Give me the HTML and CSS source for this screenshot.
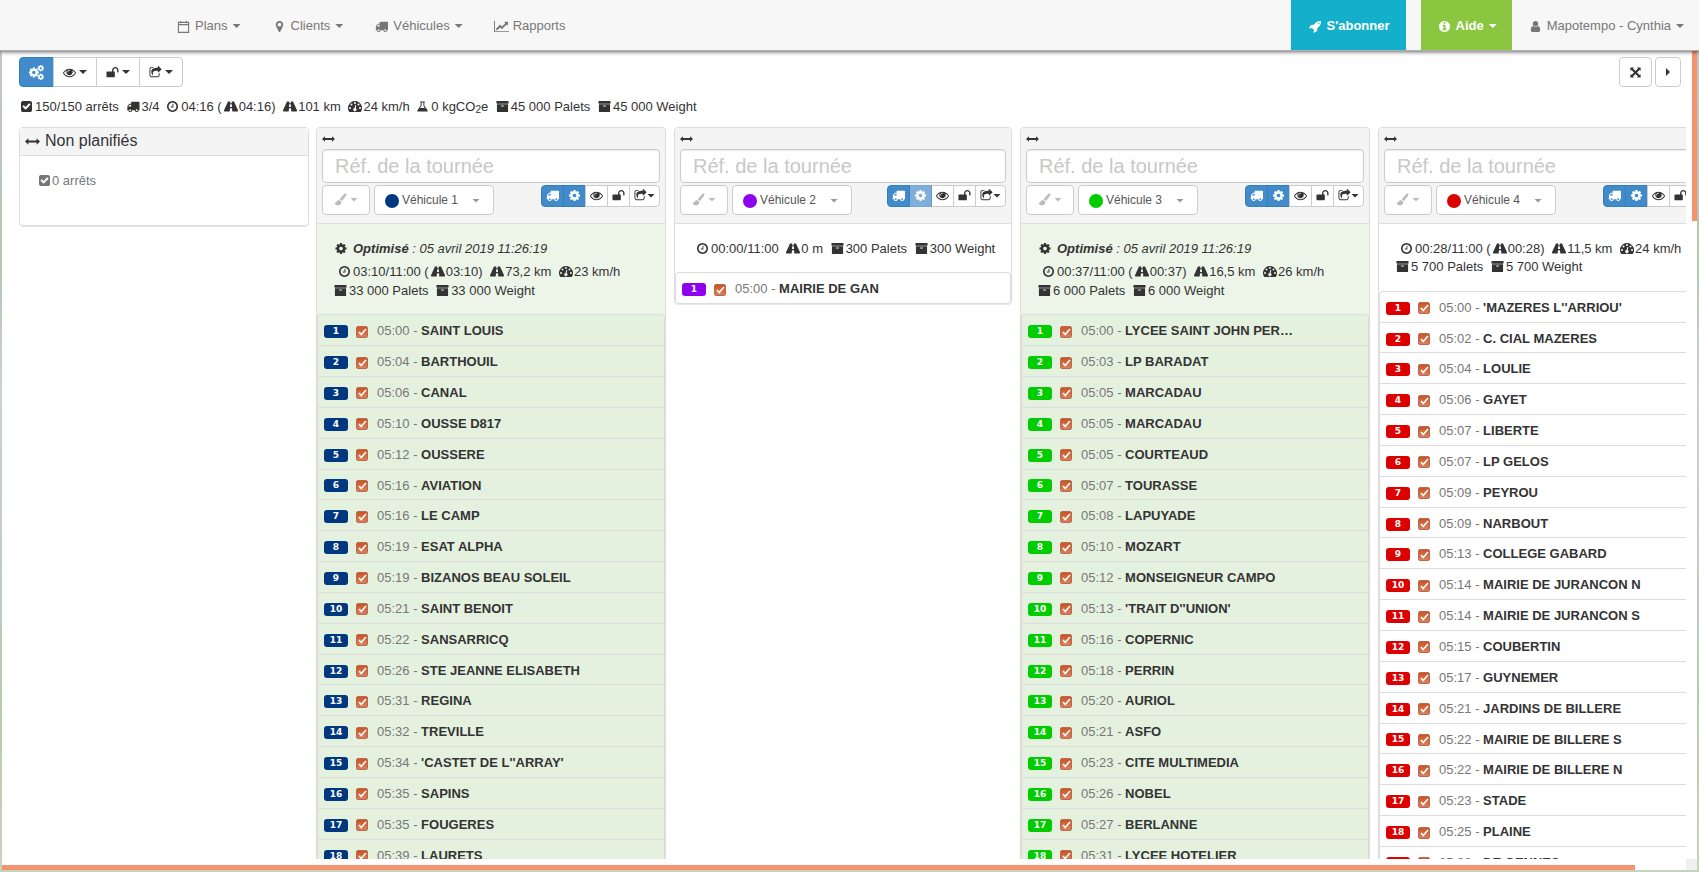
FILE: index.html
```html
<!DOCTYPE html>
<html lang="fr">
<head>
    <meta charset="UTF-8">
    <title>Mapotempo</title>
    <link rel="stylesheet" href="styles.css">
</head>
<body>
    <svg class="sprite" aria-hidden="true">
        <symbol id="calendar" viewBox="0 0 13 14"><path d="M1 2.5h11v10.8H1z M1 5h11 M3.5 1v2.6 M9.5 1v2.6" fill="none" stroke="currentColor" stroke-width="1.2"/></symbol>
        <symbol id="marker" viewBox="0 0 1792 1792"><path d="M1152 640q0-106-75-181t-181-75-181 75-75 181 75 181 181 75 181-75 75-181zm256 0q0 109-33 179l-364 774q-16 33-47.5 52t-67.5 19-67.5-19-46.5-52l-365-774q-33-70-33-179 0-212 150-362t362-150 362 150 150 362z"/></symbol>
        <symbol id="truck" viewBox="0 0 1792 1792"><path d="M640 1408q0-52-38-90t-90-38-90 38-38 90 38 90 90 38 90-38 38-90zm-384-512h384v-256h-158q-13 0-22 9l-195 195q-9 9-9 22v30zm1280 512q0-52-38-90t-90-38-90 38-38 90 38 90 90 38 90-38 38-90zm256-1088v1024q0 15-4 26.5t-13.5 18.5-16.5 11.5-23.5 6-22.5 2-25.5 0-22.5-.5q0 106-75 181t-181 75-181-75-75-181h-384q0 106-75 181t-181 75-181-75-75-181h-64q-3 0-22.5.5t-25.5 0-22.5-2-23.5-6-16.5-11.5-13.5-18.5-4-26.5q0-26 19-45t45-19v-320q0-8-.5-35t0-38 2.5-34.5 6.5-37 14-30.5 22.5-30l198-198q19-19 50.5-32t58.5-13h160v-192q0-26 19-45t45-19h1024q26 0 45 19t19 45z"/></symbol>
        <symbol id="chart" viewBox="0 0 2048 1792"><path d="M2048 1536v128h-2048v-1536h128v1408h1920zm-128-1248v435q0 21-19.5 29.5t-35.5-7.5l-121-121-633 633q-10 10-23 10t-23-10l-233-233-416 416-192-192 585-585q10-10 23-10t23 10l233 233 464-464-121-121q-16-16-7.5-35.5t29.5-19.5h435q14 0 23 9t9 23z"/></symbol>
        <symbol id="rocket" viewBox="0 0 1792 1792"><path d="M1440 448q0-40-28-68t-68-28-68 28-28 68 28 68 68 28 68-28 28-68zm224-288q0 249-75.5 430.5t-253.5 360.5q-81 80-195 176l-20 379q-2 16-16 26l-384 224q-7 4-16 4-12 0-23-9l-64-64q-13-14-8-32l85-276-281-281-276 85q-3 1-9 1-14 0-23-9l-64-64q-17-19-5-39l224-384q10-14 26-16l379-20q96-114 176-195 188-187 358-258t431-71q14 0 24 9.5t10 22.5z"/></symbol>
        <symbol id="info" viewBox="0 0 1792 1792"><path d="M1152 1376v-160q0-14-9-23t-23-9h-96v-512q0-14-9-23t-23-9h-320q-14 0-23 9t-9 23v160q0 14 9 23t23 9h96v320h-96q-14 0-23 9t-9 23v160q0 14 9 23t23 9h448q14 0 23-9t9-23zm-128-896v-160q0-14-9-23t-23-9h-192q-14 0-23 9t-9 23v160q0 14 9 23t23 9h192q14 0 23-9t9-23zm640 416q0 209-103 385.5t-279.5 279.5-385.5 103-385.5-103-279.5-279.5-103-385.5 103-385.5 279.5-279.5 385.5-103 385.5 103 279.5 279.5 103 385.5z"/></symbol>
        <symbol id="user" viewBox="0 0 1792 1792"><path d="M1536 1399q0 109-62.5 187t-150.5 78h-854q-88 0-150.5-78t-62.5-187q0-85 8.5-160.5t31.5-152 58.5-131 94-89 134.5-34.5q131 128 313 128t313-128q76 0 134.5 34.5t94 89 58.5 131 31.5 152 8.5 160.5zm-256-887q0 159-112.5 271.5t-271.5 112.5-271.5-112.5-112.5-271.5 112.5-271.5 271.5-112.5 271.5 112.5 112.5 271.5z"/></symbol>
        <symbol id="eye" viewBox="0 0 1792 1792"><path d="M1664 960q-152-236-381-353 61 104 61 225 0 185-131.5 316.5t-316.5 131.5-316.5-131.5-131.5-316.5q0-121 61-225-229 117-381 353 133 205 333.5 326.5t434.5 121.5 434.5-121.5 333.5-326.5zm-720-384q0-20-14-34t-34-14q-125 0-214.5 89.5t-89.5 214.5q0 20 14 34t34 14 34-14 14-34q0-86 61-147t147-61q20 0 34-14t14-34zm848 384q0 34-20 69-140 230-376.5 368.5t-499.5 138.5-499.5-139-376.5-368q-20-35-20-69t20-69q140-229 376.5-368t499.5-139 499.5 139 376.5 368q20 35 20 69z"/></symbol>
        <symbol id="unlock" viewBox="0 0 1792 1792"><path d="M1728 576v256q0 26-19 45t-45 19h-64q-26 0-45-19t-19-45v-256q0-106-75-181t-181-75-181 75-75 181v192h96q40 0 68 28t28 68v576q0 40-28 68t-68 28h-960q-40 0-68-28t-28-68v-576q0-40 28-68t68-28h672v-192q0-185 131.5-316.5t316.5-131.5 316.5 131.5 131.5 316.5z"/></symbol>
        <symbol id="share" viewBox="0 0 1792 1792"><path d="M1472 989v259q0 119-84.5 203.5t-203.5 84.5h-832q-119 0-203.5-84.5t-84.5-203.5v-832q0-119 84.5-203.5t203.5-84.5h255q13 0 22.5 9.5t9.5 22.5q0 27-26 32-77 26-133 60-10 4-16 4h-112q-66 0-113 47t-47 113v832q0 66 47 113t113 47h832q66 0 113-47t47-113v-214q0-19 18-29 28-13 54-37 16-16 35-8 21 9 21 29zm237-496l-384 384q-18 19-45 19-12 0-25-5-39-17-39-59v-192h-160q-323 0-438 131-119 137-74 473 3 23-20 34-8 2-12 2-16 0-26-13-10-14-21-31t-39.5-68.5-49.5-99.5-38.5-114-17.5-122q0-49 3.5-91t14-90 28-88 47-81.5 68.5-74 94.5-61.5 124.5-48.5 159.5-30.5 196.5-11h160v-192q0-42 39-59 13-5 25-5 26 0 45 19l384 384q19 19 19 45t-19 45z"/></symbol>
        <symbol id="check" viewBox="128 0 1536 1792"><path d="M813 1299l614-614q19-19 19-45t-19-45l-102-102q-19-19-45-19t-45 19l-467 467-211-211q-19-19-45-19t-45 19l-102 102q-19 19-19 45t19 45l358 358q19 19 45 19t45-19zm851-883v960q0 119-84.5 203.5t-203.5 84.5h-960q-119 0-203.5-84.5t-84.5-203.5v-960q0-119 84.5-203.5t203.5-84.5h960q119 0 203.5 84.5t84.5 203.5z"/></symbol>
        <symbol id="clock" viewBox="128 0 1536 1792"><path d="M1024 544v448q0 14-9 23t-23 9h-320q-14 0-23-9t-9-23v-64q0-14 9-23t23-9h224v-352q0-14 9-23t23-9h64q14 0 23 9t9 23zm416 352q0-148-73-273t-198-198-273-73-273 73-198 198-73 273 73 273 198 198 273 73 273-73 198-198 73-273zm224 0q0 209-103 385.5t-279.5 279.5-385.5 103-385.5-103-279.5-279.5-103-385.5 103-385.5 279.5-279.5 385.5-103 385.5 103 279.5 279.5 103 385.5z"/></symbol>
        <symbol id="archive" viewBox="0 0 1792 1792"><path d="M1088 832q0-26-19-45t-45-19h-256q-26 0-45 19t-19 45 19 45 45 19h256q26 0 45-19t19-45zm576-192v960q0 26-19 45t-45 19h-1408q-26 0-45-19t-19-45v-960q0-26 19-45t45-19h1408q26 0 45 19t19 45zm64-448v256q0 26-19 45t-45 19h-1536q-26 0-45-19t-19-45v-256q0-26 19-45t45-19h1536q26 0 45 19t19 45z"/></symbol>
        <symbol id="cog" viewBox="0 0 1792 1792"><path d="M1152 896q0-106-75-181t-181-75-181 75-75 181 75 181 181 75 181-75 75-181zm512-109v222q0 12-8 23t-20 13l-185 28q-19 54-39 91 35 50 107 138 10 12 10 25t-9 23q-27 37-99 108t-94 71q-12 0-26-9l-138-108q-44 23-91 38-16 136-29 186-7 28-36 28h-222q-14 0-24.5-8.5t-11.5-21.5l-28-184q-49-16-90-37l-141 107q-10 9-25 9-14 0-25-11-126-114-165-168-7-10-7-23 0-12 8-23 15-21 51-66.5t54-70.5q-27-50-41-99l-183-27q-13-2-21-12.5t-8-23.5v-222q0-12 8-23t19-13l186-28q14-46 39-92-40-57-107-138-10-12-10-24 0-10 9-23 26-36 98.5-107.5t94.5-71.5q13 0 26 10l138 107q44-23 91-38 16-136 29-186 7-28 36-28h222q14 0 24.5 8.5t11.5 21.5l28 184q49 16 90 37l142-107q9-9 24-9 13 0 25 10 129 119 165 170 7 8 7 22 0 12-8 23-15 21-51 66.5t-54 70.5q26 50 41 98l183 28q13 2 21 12.5t8 23.5z"/></symbol>
        <symbol id="cogs" viewBox="0 0 14 14"><use href="#cog" x="-1" y="1.5" width="11" height="11"/><use href="#cog" x="7.500" y="-.5" width="7" height="7"/><use href="#cog" x="7.500" y="7.500" width="7" height="7"/></symbol>
        <symbol id="road" viewBox="0 0 14 13"><path fill-rule="evenodd" d="M4 1.5h2.3l-.1 1.7h1.6l-.1-1.7H10L14 10.300q.2 1.200-.6 1.200H8.300L8 8.300H6l-.3 3.200H.6Q-.2 11.500 0 10.300zM6.200 4.300L6 7h2l-.2-2.700z"/></symbol>
        <symbol id="tacho" viewBox="0 0 14 13"><path fill-rule="evenodd" d="M7 1a7 7 0 0 0-5.700 11h11.400A7 7 0 0 0 7 1zM7 2a1 1 0 1 1 0 2 1 1 0 0 1 0-2zM3.500 3.500a1 1 0 1 1 0 2 1 1 0 0 1 0-2zM10.500 3.500a1 1 0 1 1 0 2 1 1 0 0 1 0-2zM2 7a1 1 0 1 1 0 2 1 1 0 0 1 0-2zM12 7a1 1 0 1 1 0 2 1 1 0 0 1 0-2zM7.300 5l1 .3-.6 2.900a1.600 1.600 0 1 1-1.100-.2z"/></symbol>
        <symbol id="flask" viewBox="0 0 12 13"><path fill-rule="evenodd" d="M3.500 1h5v1H8v3.300l3.500 5.300q.8 1.400-.8 1.400H1.300q-1.600 0-.8-1.400L4 5.300V2h-.5zM5 2v3.600L3.400 8h5.200L7 5.600V2z"/></symbol>
        <symbol id="brush" viewBox="0 0 14 14"><path d="M12.800.6q1 .5.500 1.700L8.700 8.700 6 6.800 11.300.9q.8-.7 1.500-.3zM5.400 7.600L7.900 9.500Q8 13 4.500 13.400 1.500 13.500.3 10.600q1.300.4 2-.6 1-2 3.100-2.400z"/></symbol>
        <symbol id="arrows-h" viewBox="0 0 14 6"><path d="M0 3L3.200 0v2h7.600V0L14 3l-3.200 3V4H3.200v2z"/></symbol>
        <symbol id="expand" viewBox="-1 -1 14 14"><path d="M.5.500h4L3.300 1.700 6 4.400l2.700-2.700L7.500.500h4v4L10.300 3.300 7.600 6l2.700 2.700 1.200-1.200v4h-4l1.200-1.200L6 7.600l-2.700 2.700 1.200 1.200h-4v-4l1.200 1.200L4.400 6 1.700 3.300.500 4.500z"/></symbol>
    </svg>

    <nav class="navbar">
        <div class="nav-left">
            <a href="#"><svg class="icon"><use href="#calendar"/></svg>Plans<i class="caret"></i></a>
            <a href="#"><svg class="icon"><use href="#marker"/></svg>Clients<i class="caret"></i></a>
            <a href="#"><svg class="icon"><use href="#truck"/></svg>Véhicules<i class="caret"></i></a>
            <a href="#"><svg class="icon icon-chart"><use href="#chart"/></svg>Rapports</a>
        </div>
        <div class="nav-right">
            <a href="#" class="subscribe"><svg class="icon"><use href="#rocket"/></svg>S'abonner</a>
            <a href="#" class="help"><svg class="icon"><use href="#info"/></svg>Aide<i class="caret"></i></a>
            <a href="#"><svg class="icon"><use href="#user"/></svg>Mapotempo - Cynthia<i class="caret"></i></a>
        </div>
    </nav>

    <main class="panel">
        <div class="content">
            <div class="toolbar">
                <div class="btn-group">
                    <button class="btn primary" aria-label="Optimiser"><svg class="icon"><use href="#cogs"/></svg></button>
                    <button class="btn" aria-label="Afficher"><svg class="icon"><use href="#eye"/></svg><i class="caret"></i></button>
                    <button class="btn" aria-label="Verrouiller"><svg class="icon"><use href="#unlock"/></svg><i class="caret"></i></button>
                    <button class="btn" aria-label="Exporter"><svg class="icon"><use href="#share"/></svg><i class="caret"></i></button>
                </div>
                <div class="btn-right">
                    <button class="btn" aria-label="Agrandir"><svg class="icon"><use href="#expand"/></svg></button>
                    <button class="btn" aria-label="Replier"><i class="caret-right"></i></button>
                </div>
            </div>

            <div class="stats total">
                <span><svg class="ic"><use href="#check"/></svg>150/150 arrêts</span>
                <span><svg class="ic wide"><use href="#truck"/></svg>3/4</span>
                <span><svg class="ic"><use href="#clock"/></svg>04:16 (<svg class="ic wide drive"><use href="#road"/></svg>04:16)</span>
                <span><svg class="ic wide"><use href="#road"/></svg>101 km</span>
                <span><svg class="ic wide"><use href="#tacho"/></svg>24 km/h</span>
                <span><svg class="ic"><use href="#flask"/></svg>0 kgCO<sub>2</sub>e</span>
                <span><svg class="ic box"><use href="#archive"/></svg>45 000 Palets</span>
                <span><svg class="ic box"><use href="#archive"/></svg>45 000 Weight</span>
            </div>

            <div class="columns">
                <section class="column unplanned">
                    <h2><svg class="arrows"><use href="#arrows-h"/></svg>Non planifiés</h2>
                    <p><svg class="ic"><use href="#check"/></svg>0 arrêts</p>
                </section>

                <section class="column blue optimized">
                    <header>
                        <svg class="arrows"><use href="#arrows-h"/></svg>
                        <input type="text" class="ref" placeholder="Réf. de la tournée" aria-label="Réf. de la tournée">
                        <div class="tools">
                            <button class="btn brush" aria-label="Couleur"><svg class="icon"><use href="#brush"/></svg><i class="caret"></i></button>
                            <div class="vehicle"><i class="dot"></i><select aria-label="Véhicule"><option>Véhicule 1</option></select><i class="caret"></i></div>
                            <div class="btn-group small">
                                <button class="btn primary" aria-label="Véhicule"><svg class="icon"><use href="#truck"/></svg></button>
                                <button class="btn primary" aria-label="Optimiser"><svg class="icon"><use href="#cog"/></svg></button>
                                <button class="btn" aria-label="Afficher"><svg class="icon"><use href="#eye"/></svg></button>
                                <button class="btn" aria-label="Verrouiller"><svg class="icon"><use href="#unlock"/></svg></button>
                                <button class="btn" aria-label="Exporter"><svg class="icon"><use href="#share"/></svg><i class="caret"></i></button>
                            </div>
                        </div>
                    </header>
                    <div class="summary">
                        <p class="optim"><svg class="ic wide"><use href="#cog"/></svg><em><b>Optimisé</b> : 05 avril 2019 11:26:19</em></p>
                        <div class="stats">
                            <span><svg class="ic"><use href="#clock"/></svg>03:10/11:00 (<svg class="ic wide drive"><use href="#road"/></svg>03:10)</span>
                            <span><svg class="ic wide"><use href="#road"/></svg>73,2 km</span>
                            <span><svg class="ic wide"><use href="#tacho"/></svg>23 km/h</span>
                            <span><svg class="ic box"><use href="#archive"/></svg>33 000 Palets</span>
                            <span><svg class="ic box"><use href="#archive"/></svg>33 000 Weight</span>
                        </div>
                    </div>
                    <ol class="stops">
                        <li><i>1</i><label><input type="checkbox" checked>05:00 - <b>SAINT LOUIS</b></label></li>
                        <li><i>2</i><label><input type="checkbox" checked>05:04 - <b>BARTHOUIL</b></label></li>
                        <li><i>3</i><label><input type="checkbox" checked>05:06 - <b>CANAL</b></label></li>
                        <li><i>4</i><label><input type="checkbox" checked>05:10 - <b>OUSSE D817</b></label></li>
                        <li><i>5</i><label><input type="checkbox" checked>05:12 - <b>OUSSERE</b></label></li>
                        <li><i>6</i><label><input type="checkbox" checked>05:16 - <b>AVIATION</b></label></li>
                        <li><i>7</i><label><input type="checkbox" checked>05:16 - <b>LE CAMP</b></label></li>
                        <li><i>8</i><label><input type="checkbox" checked>05:19 - <b>ESAT ALPHA</b></label></li>
                        <li><i>9</i><label><input type="checkbox" checked>05:19 - <b>BIZANOS BEAU SOLEIL</b></label></li>
                        <li><i>10</i><label><input type="checkbox" checked>05:21 - <b>SAINT BENOIT</b></label></li>
                        <li><i>11</i><label><input type="checkbox" checked>05:22 - <b>SANSARRICQ</b></label></li>
                        <li><i>12</i><label><input type="checkbox" checked>05:26 - <b>STE JEANNE ELISABETH</b></label></li>
                        <li><i>13</i><label><input type="checkbox" checked>05:31 - <b>REGINA</b></label></li>
                        <li><i>14</i><label><input type="checkbox" checked>05:32 - <b>TREVILLE</b></label></li>
                        <li><i>15</i><label><input type="checkbox" checked>05:34 - <b>'CASTET DE L''ARRAY'</b></label></li>
                        <li><i>16</i><label><input type="checkbox" checked>05:35 - <b>SAPINS</b></label></li>
                        <li><i>17</i><label><input type="checkbox" checked>05:35 - <b>FOUGERES</b></label></li>
                        <li><i>18</i><label><input type="checkbox" checked>05:39 - <b>LAURETS</b></label></li>
                    </ol>
                </section>

                <section class="column purple narrow">
                    <header>
                        <svg class="arrows"><use href="#arrows-h"/></svg>
                        <input type="text" class="ref" placeholder="Réf. de la tournée" aria-label="Réf. de la tournée">
                        <div class="tools">
                            <button class="btn brush" aria-label="Couleur"><svg class="icon"><use href="#brush"/></svg><i class="caret"></i></button>
                            <div class="vehicle"><i class="dot"></i><select aria-label="Véhicule"><option>Véhicule 2</option></select><i class="caret"></i></div>
                            <div class="btn-group small">
                                <button class="btn primary" aria-label="Véhicule"><svg class="icon"><use href="#truck"/></svg></button>
                                <button class="btn primary" aria-label="Optimiser" disabled><svg class="icon"><use href="#cog"/></svg></button>
                                <button class="btn" aria-label="Afficher"><svg class="icon"><use href="#eye"/></svg></button>
                                <button class="btn" aria-label="Verrouiller"><svg class="icon"><use href="#unlock"/></svg></button>
                                <button class="btn" aria-label="Exporter"><svg class="icon"><use href="#share"/></svg><i class="caret"></i></button>
                            </div>
                        </div>
                    </header>
                    <div class="summary">
                        <div class="stats">
                            <span><svg class="ic"><use href="#clock"/></svg>00:00/11:00</span>
                            <span><svg class="ic wide"><use href="#road"/></svg>0 m</span>
                            <span><svg class="ic box"><use href="#archive"/></svg>300 Palets</span>
                            <span><svg class="ic box"><use href="#archive"/></svg>300 Weight</span>
                        </div>
                    </div>
                    <ol class="stops">
                        <li><i>1</i><label><input type="checkbox" checked>05:00 - <b>MAIRIE DE GAN</b></label></li>
                    </ol>
                </section>

                <section class="column green optimized">
                    <header>
                        <svg class="arrows"><use href="#arrows-h"/></svg>
                        <input type="text" class="ref" placeholder="Réf. de la tournée" aria-label="Réf. de la tournée">
                        <div class="tools">
                            <button class="btn brush" aria-label="Couleur"><svg class="icon"><use href="#brush"/></svg><i class="caret"></i></button>
                            <div class="vehicle"><i class="dot"></i><select aria-label="Véhicule"><option>Véhicule 3</option></select><i class="caret"></i></div>
                            <div class="btn-group small">
                                <button class="btn primary" aria-label="Véhicule"><svg class="icon"><use href="#truck"/></svg></button>
                                <button class="btn primary" aria-label="Optimiser"><svg class="icon"><use href="#cog"/></svg></button>
                                <button class="btn" aria-label="Afficher"><svg class="icon"><use href="#eye"/></svg></button>
                                <button class="btn" aria-label="Verrouiller"><svg class="icon"><use href="#unlock"/></svg></button>
                                <button class="btn" aria-label="Exporter"><svg class="icon"><use href="#share"/></svg><i class="caret"></i></button>
                            </div>
                        </div>
                    </header>
                    <div class="summary">
                        <p class="optim"><svg class="ic wide"><use href="#cog"/></svg><em><b>Optimisé</b> : 05 avril 2019 11:26:19</em></p>
                        <div class="stats">
                            <span><svg class="ic"><use href="#clock"/></svg>00:37/11:00 (<svg class="ic wide drive"><use href="#road"/></svg>00:37)</span>
                            <span><svg class="ic wide"><use href="#road"/></svg>16,5 km</span>
                            <span><svg class="ic wide"><use href="#tacho"/></svg>26 km/h</span>
                            <span><svg class="ic box"><use href="#archive"/></svg>6 000 Palets</span>
                            <span><svg class="ic box"><use href="#archive"/></svg>6 000 Weight</span>
                        </div>
                    </div>
                    <ol class="stops">
                        <li><i>1</i><label><input type="checkbox" checked>05:00 - <b>LYCEE SAINT JOHN PER…</b></label></li>
                        <li><i>2</i><label><input type="checkbox" checked>05:03 - <b>LP BARADAT</b></label></li>
                        <li><i>3</i><label><input type="checkbox" checked>05:05 - <b>MARCADAU</b></label></li>
                        <li><i>4</i><label><input type="checkbox" checked>05:05 - <b>MARCADAU</b></label></li>
                        <li><i>5</i><label><input type="checkbox" checked>05:05 - <b>COURTEAUD</b></label></li>
                        <li><i>6</i><label><input type="checkbox" checked>05:07 - <b>TOURASSE</b></label></li>
                        <li><i>7</i><label><input type="checkbox" checked>05:08 - <b>LAPUYADE</b></label></li>
                        <li><i>8</i><label><input type="checkbox" checked>05:10 - <b>MOZART</b></label></li>
                        <li><i>9</i><label><input type="checkbox" checked>05:12 - <b>MONSEIGNEUR CAMPO</b></label></li>
                        <li><i>10</i><label><input type="checkbox" checked>05:13 - <b>'TRAIT D''UNION'</b></label></li>
                        <li><i>11</i><label><input type="checkbox" checked>05:16 - <b>COPERNIC</b></label></li>
                        <li><i>12</i><label><input type="checkbox" checked>05:18 - <b>PERRIN</b></label></li>
                        <li><i>13</i><label><input type="checkbox" checked>05:20 - <b>AURIOL</b></label></li>
                        <li><i>14</i><label><input type="checkbox" checked>05:21 - <b>ASFO</b></label></li>
                        <li><i>15</i><label><input type="checkbox" checked>05:23 - <b>CITE MULTIMEDIA</b></label></li>
                        <li><i>16</i><label><input type="checkbox" checked>05:26 - <b>NOBEL</b></label></li>
                        <li><i>17</i><label><input type="checkbox" checked>05:27 - <b>BERLANNE</b></label></li>
                        <li><i>18</i><label><input type="checkbox" checked>05:31 - <b>LYCEE HOTELIER</b></label></li>
                    </ol>
                </section>

                <section class="column red">
                    <header>
                        <svg class="arrows"><use href="#arrows-h"/></svg>
                        <input type="text" class="ref" placeholder="Réf. de la tournée" aria-label="Réf. de la tournée">
                        <div class="tools">
                            <button class="btn brush" aria-label="Couleur"><svg class="icon"><use href="#brush"/></svg><i class="caret"></i></button>
                            <div class="vehicle"><i class="dot"></i><select aria-label="Véhicule"><option>Véhicule 4</option></select><i class="caret"></i></div>
                            <div class="btn-group small">
                                <button class="btn primary" aria-label="Véhicule"><svg class="icon"><use href="#truck"/></svg></button>
                                <button class="btn primary" aria-label="Optimiser"><svg class="icon"><use href="#cog"/></svg></button>
                                <button class="btn" aria-label="Afficher"><svg class="icon"><use href="#eye"/></svg></button>
                                <button class="btn" aria-label="Verrouiller"><svg class="icon"><use href="#unlock"/></svg></button>
                                <button class="btn" aria-label="Exporter"><svg class="icon"><use href="#share"/></svg><i class="caret"></i></button>
                            </div>
                        </div>
                    </header>
                    <div class="summary">
                        <div class="stats">
                            <span><svg class="ic"><use href="#clock"/></svg>00:28/11:00 (<svg class="ic wide drive"><use href="#road"/></svg>00:28)</span>
                            <span><svg class="ic wide"><use href="#road"/></svg>11,5 km</span>
                            <span><svg class="ic wide"><use href="#tacho"/></svg>24 km/h</span>
                            <span><svg class="ic box"><use href="#archive"/></svg>5 700 Palets</span>
                            <span><svg class="ic box"><use href="#archive"/></svg>5 700 Weight</span>
                        </div>
                    </div>
                    <ol class="stops">
                        <li><i>1</i><label><input type="checkbox" checked>05:00 - <b>'MAZERES L''ARRIOU'</b></label></li>
                        <li><i>2</i><label><input type="checkbox" checked>05:02 - <b>C. CIAL MAZERES</b></label></li>
                        <li><i>3</i><label><input type="checkbox" checked>05:04 - <b>LOULIE</b></label></li>
                        <li><i>4</i><label><input type="checkbox" checked>05:06 - <b>GAYET</b></label></li>
                        <li><i>5</i><label><input type="checkbox" checked>05:07 - <b>LIBERTE</b></label></li>
                        <li><i>6</i><label><input type="checkbox" checked>05:07 - <b>LP GELOS</b></label></li>
                        <li><i>7</i><label><input type="checkbox" checked>05:09 - <b>PEYROU</b></label></li>
                        <li><i>8</i><label><input type="checkbox" checked>05:09 - <b>NARBOUT</b></label></li>
                        <li><i>9</i><label><input type="checkbox" checked>05:13 - <b>COLLEGE GABARD</b></label></li>
                        <li><i>10</i><label><input type="checkbox" checked>05:14 - <b>MAIRIE DE JURANCON N</b></label></li>
                        <li><i>11</i><label><input type="checkbox" checked>05:14 - <b>MAIRIE DE JURANCON S</b></label></li>
                        <li><i>12</i><label><input type="checkbox" checked>05:15 - <b>COUBERTIN</b></label></li>
                        <li><i>13</i><label><input type="checkbox" checked>05:17 - <b>GUYNEMER</b></label></li>
                        <li><i>14</i><label><input type="checkbox" checked>05:21 - <b>JARDINS DE BILLERE</b></label></li>
                        <li><i>15</i><label><input type="checkbox" checked>05:22 - <b>MAIRIE DE BILLERE S</b></label></li>
                        <li><i>16</i><label><input type="checkbox" checked>05:22 - <b>MAIRIE DE BILLERE N</b></label></li>
                        <li><i>17</i><label><input type="checkbox" checked>05:23 - <b>STADE</b></label></li>
                        <li><i>18</i><label><input type="checkbox" checked>05:25 - <b>PLAINE</b></label></li>
                        <li><i>19</i><label><input type="checkbox" checked>05:26 - <b>DE GENNES</b></label></li>
                    </ol>
                </section>
            </div>
        </div>
        <div class="track-y"><div class="thumb"></div></div>
        <div class="track-x"><div class="thumb"></div></div>
        <div class="corner"></div>
    </main>
</body>
</html>
```

FILE: styles.css
```css
*{
    box-sizing: border-box;
    margin: 0;
    padding: 0;
}
body{
    display: flex;
    flex-direction: column;
    height: 100vh;
    overflow: hidden;
    background: linear-gradient(#c3c9cc, #b3c8ae 30%, #c9d1d3 45%, #b5cbb0 80%, #c8d3bd);
    color: #333;
    font: 13px/1.43 "Liberation Sans", Arial, sans-serif;
}
svg{
    fill: currentColor;
}
button, input, select{
    font: inherit;
    color: inherit;
}
.sprite{
    display: none;
}
.icon{
    width: 13px;
    height: 13px;
    flex: none;
}
.caret{
    width: 8px;
    height: 4px;
    flex: none;
    background: currentColor;
    clip-path: polygon(0 0, 100% 0, 50% 100%);
}
.caret-right{
    width: 4px;
    height: 8px;
    margin: 0 1px;
    background: currentColor;
    clip-path: polygon(0 0, 100% 50%, 0 100%);
}

/* navbar */
.navbar{
    display: flex;
    justify-content: space-between;
    flex: none;
    height: 51px;
    padding-left: 160px;
    background: #f7f7f7;
    border-bottom: 1px solid #b0b0b0;
    box-shadow: 0 1px 4px rgba(0,0,0,0.6);
    position: relative;
    z-index: 1;
}
.nav-left, .nav-right{
    display: flex;
}
.navbar a{
    display: flex;
    align-items: center;
    height: 50px;
    padding: 2px 15px 0;
    color: #777;
    text-decoration: none;
}
.navbar .icon{
    margin: 0 5px 0 2px;
}
.navbar .icon-chart{
    width: 15px;
    margin: 0 4px 0 1px;
}
.navbar .caret{
    margin-left: 5px;
}
.navbar .subscribe, .navbar .help{
    color: #fff;
    font-weight: bold;
}
.navbar .subscribe{
    padding: 2px 16px 0;
    background: #14b0cb;
    margin-right: 15px;
}
.navbar .help{
    background: #8ac640;
}

/* panel */
.panel{
    flex: 1;
    display: grid;
    grid-template-columns: minmax(0, 1fr) 11px;
    grid-template-rows: minmax(0, 1fr) 11px;
    min-height: 0;
    margin: 0 2px 2px;
    background: #fff;
}
.track-y .thumb{
    width: 5px;
    height: 21%;
    margin-left: auto;
    background: #f4946e;
}
.track-x{
    display: flex;
    align-items: flex-end;
}
.track-x .thumb{
    width: 97%;
    height: 5px;
    background: #f4946e;
}
.corner{
    background: #f0f0f0;
}
.content{
    display: flex;
    flex-direction: column;
    padding: 6px 0 0 17px;
    overflow: hidden;
}
.toolbar{
    display: flex;
    justify-content: space-between;
    padding-right: 5px;
}
.btn-group, .btn-right{
    display: flex;
}
.btn-right{
    gap: 3px;
}
.btn{
    display: flex;
    align-items: center;
    justify-content: center;
    gap: 3px;
    height: 30px;
    padding: 0 9px;
    background: #fff;
    border: 1px solid #ccc;
    border-radius: 4px;
    white-space: nowrap;
}
.btn-group .btn{
    margin-left: -1px;
    border-radius: 0;
}
.btn-group .btn:first-child{
    margin-left: 0;
    border-radius: 4px 0 0 4px;
}
.btn-group .btn:last-child{
    border-radius: 0 4px 4px 0;
}
.btn.primary{
    background: #428bca;
    border-color: #357ebd;
    color: #fff;
}
.toolbar .primary .icon{
    width: 15px;
    height: 15px;
}
.btn:disabled{
    opacity: 0.65;
}

/* stats */
.stats span{
    margin-right: 4px;
    white-space: nowrap;
}
.stats sub{
    font-size: 10px;
    line-height: 0;
    vertical-align: -2px;
}
.total{
    margin: 11px 0 10px 2px;
}
.ic{
    display: inline-block;
    width: 11px;
    height: 13px;
    margin-right: 3px;
    vertical-align: -2px;
}
.wide{
    width: 14px;
    margin-right: 1px;
}
.drive{
    margin-left: 2px;
}
.box{
    width: 13px;
    margin-right: 2px;
}

/* columns */
.columns{
    display: flex;
    align-items: flex-start;
    gap: 8px;
    flex: 1;
    min-height: 0;
    overflow: hidden;
}
.column{
    flex: none;
    width: 350px;
    border: 1px solid #ddd;
    border-radius: 4px;
    box-shadow: 0 1px 1px rgba(0,0,0,0.1);
}
.narrow{
    width: 338px;
}
.unplanned{
    width: 290px;
    min-height: 99px;
    margin-right: -1px;
}
.unplanned h2{
    display: flex;
    align-items: center;
    gap: 5px;
    height: 28px;
    padding: 1px 5px 0;
    background: #f4f4f4;
    border-bottom: 1px solid #ddd;
    font-size: 16px;
    font-weight: normal;
}
.unplanned p{
    padding: 16px 19px;
    color: #777;
}
.unplanned .ic{
    margin-right: 2px;
}
.arrows{
    display: block;
    width: 13px;
    height: 6px;
}
.unplanned .arrows{
    width: 15px;
    height: 7px;
}
.column header{
    height: 96px;
    padding: 8px 5px 0;
    background: #f4f4f4;
    border-bottom: 1px solid #ddd;
    border-radius: 3px 3px 0 0;
}
.ref{
    display: block;
    width: 100%;
    height: 34px;
    margin: 7px 0 2px;
    padding: 2px 12px 0;
    border: 1px solid #ccc;
    border-radius: 4px;
    background: #fff;
    box-shadow: inset 0 1px 1px rgba(0,0,0,0.08);
    font-size: 20px;
}
.ref::placeholder{
    color: #c8c8c8;
}
.tools{
    display: flex;
    align-items: flex-start;
    gap: 4px;
}
.brush{
    width: 48px;
    padding: 0;
    color: #bbb;
}
.vehicle{
    display: flex;
    align-items: center;
    width: 120px;
    height: 30px;
    padding: 2px 13px 0 10px;
    background: #fff;
    border: 1px solid #ccc;
    border-radius: 4px;
    color: #999;
}
.vehicle select{
    flex: 1;
    min-width: 0;
    margin-left: 3px;
    appearance: none;
    border: 0;
    background: none;
    color: #555;
    font-size: 12px;
}
.dot{
    width: 14px;
    height: 14px;
    border-radius: 50%;
}
.small{
    margin-left: auto;
}
.small .btn{
    gap: 0;
    height: 22px;
    padding: 0 4px;
}
.summary{
    padding: 16px 0 14px 17px;
}
.summary .stats{
    text-indent: 5px;
}
.optim{
    margin-bottom: 5px;
}
.optim .ic{
    margin-right: 5px;
}
.optimized{
    background: #edf5e9;
}
.optimized .stops{
    background: #e5f1df;
}

/* stops */
.stops{
    list-style: none;
    border-radius: 4px;
    line-height: 1.45;
}
.stops li{
    display: flex;
    align-items: center;
    gap: 8px;
    padding: 7px 6px 4px;
    border: 1px solid #ddd;
    border-bottom: 0;
    white-space: nowrap;
}
.stops li:first-child{
    border-radius: 4px 4px 0 0;
}
.stops li:only-child{
    border-radius: 4px;
}
.stops i{
    width: 24px;
    height: 13px;
    border-radius: 3px;
    color: #fff;
    font: bold 9px/13px "DejaVu Sans", sans-serif;
    text-align: center;
}
.stops label{
    display: flex;
    align-items: center;
    color: #777;
    white-space: pre;
}
.stops b{
    color: #333;
}
.stops input{
    appearance: none;
    width: 12px;
    height: 12px;
    margin-right: 9px;
    border: 1px solid #b9694c;
    border-radius: 2px;
    background: url("data:image/svg+xml,%3Csvg xmlns='http://www.w3.org/2000/svg' viewBox='0 0 10 10'%3E%3Cpath d='M2 5l2.200 2.500L9 2' fill='none' stroke='white' stroke-width='1.600'/%3E%3C/svg%3E"), linear-gradient(#cb5426, #dd7e5a);
}
.blue .dot, .blue .stops i{
    background: #003880;
}
.purple .dot, .purple .stops i{
    background: #8f00ef;
}
.green .dot, .green .stops i{
    background: #00cc00;
}
.red .dot, .red .stops i{
    background: #dd0000;
}
```
